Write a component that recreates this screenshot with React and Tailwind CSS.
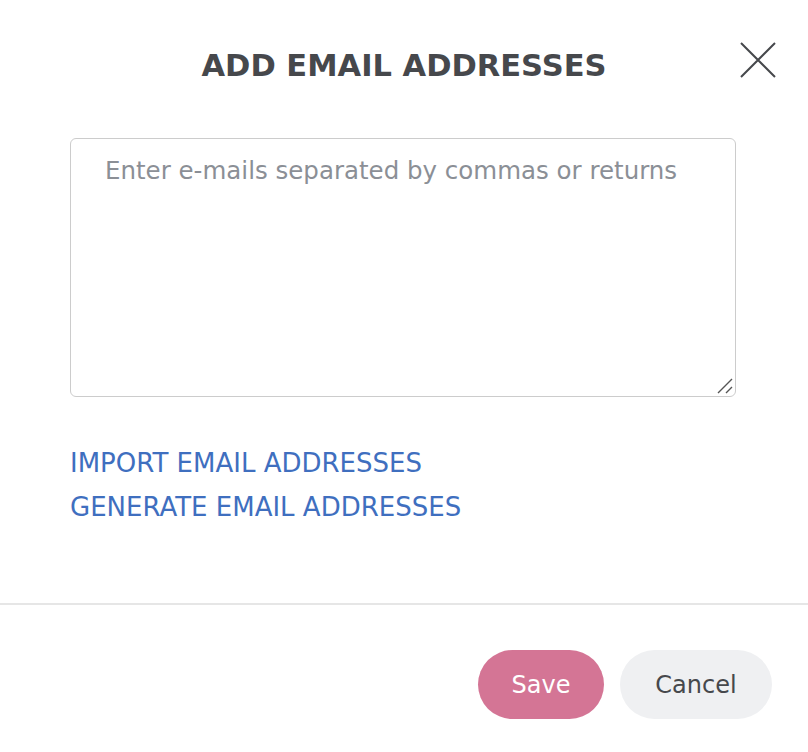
export default function App() {
  return (
    <div className="w-[808px] h-[752px] bg-white font-['DejaVu_Sans',sans-serif]">
      {/* Header */}
      <div className="grid grid-cols-[1fr_auto_1fr] items-start pt-[42px]">
        <div />
        <h1 className="mt-[6px] text-[30.5px] font-bold text-[#46484c] leading-[36px]">
          ADD EMAIL ADDRESSES
        </h1>
        <div className="flex justify-end pr-[32px]">
          <button className="w-[36px] h-[36px] text-[#46484c]" aria-label="Close">
            <svg viewBox="0 0 36 36" width="36" height="36" fill="none" stroke="currentColor" strokeWidth="2">
              <path d="M1 1L35 35M35 1L1 35" />
            </svg>
          </button>
        </div>
      </div>

      {/* Body */}
      <div className="px-[70px] pt-[54px]">
        <div className="relative w-[666px]">
          <textarea
            className="block w-[666px] h-[259px] resize-none border border-[#cccccc] rounded-[6px] px-[34px] py-[17px] text-[24.5px] leading-[30px] text-[#46484c] placeholder:text-[#8b8f96] outline-none"
            placeholder="Enter e-mails separated by commas or returns"
          />
          {/* resize grip */}
          <svg
            className="absolute right-[2px] bottom-[2px] pointer-events-none"
            width="18"
            height="18"
            viewBox="0 0 18 18"
            fill="none"
            stroke="#555"
            strokeWidth="1.4"
          >
            <path d="M2 16L16 2M10 16L16 10" />
          </svg>
        </div>
        <div className="flex flex-col gap-[14px] pt-[51px] text-[26px] leading-[30px] text-[#3f6fbf]">
          <a href="#" className="w-fit">IMPORT EMAIL ADDRESSES</a>
          <a href="#" className="w-fit">GENERATE EMAIL ADDRESSES</a>
        </div>
      </div>

      {/* Footer */}
      <div className="mt-[81px] border-t-2 border-[#e6e6e6] flex justify-end gap-[16px] pt-[45px] pr-[36px]">
        <button className="w-[126px] h-[69px] rounded-full bg-[#d47595] text-white text-[24px]">
          Save
        </button>
        <button className="w-[152px] h-[69px] rounded-full bg-[#eff0f2] text-[#46484c] text-[24px]">
          Cancel
        </button>
      </div>
    </div>
  );
}
